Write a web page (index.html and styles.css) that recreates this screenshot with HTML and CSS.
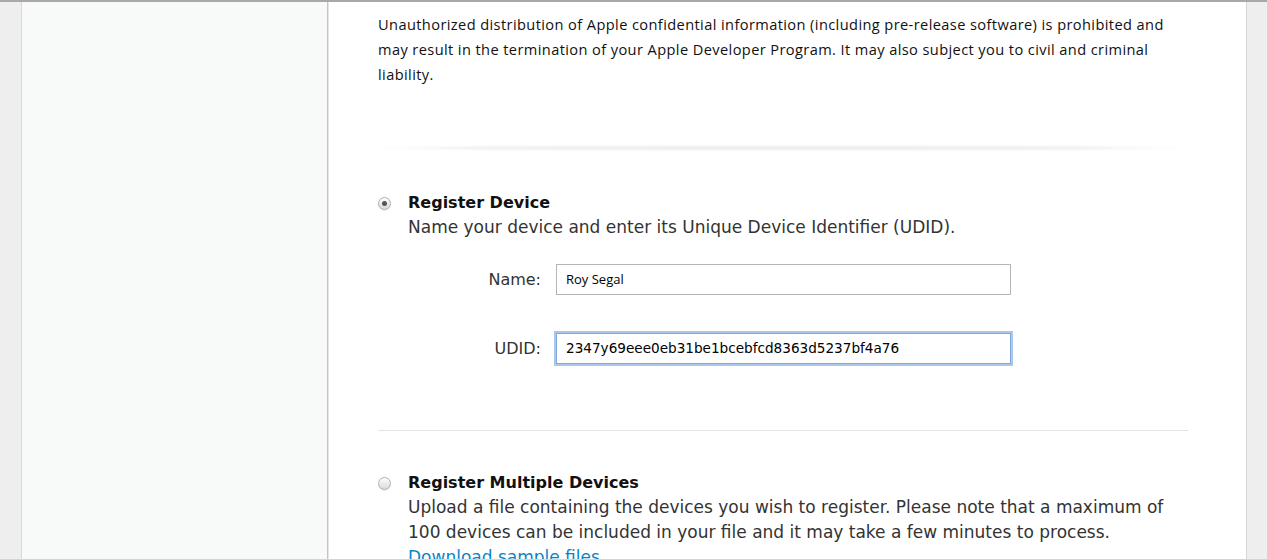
FILE: index.html
```html
<!DOCTYPE html>
<html>
<head>
<meta charset="utf-8">
<link rel="stylesheet" href="styles.css">
</head>
<body>
<div class="page">
  <div class="gutter gutter-left"></div>
  <aside class="sidebar"></aside>
  <main class="main">
    <p class="notice">Unauthorized distribution of Apple confidential information (including pre-release software) is prohibited and may result in the termination of your Apple Developer Program. It may also subject you to civil and criminal liability.</p>
    <div class="shadow-divider"></div>
    <section class="option">
      <span class="radio radio-on"></span>
      <div class="option-body">
        <h2 class="option-title">Register Device</h2>
        <p class="option-desc">Name your device and enter its Unique Device Identifier (UDID).</p>
        <div class="fields">
          <div class="field">
            <label class="field-label">Name:</label>
            <div class="input">Roy Segal</div>
          </div>
          <div class="field">
            <label class="field-label">UDID:</label>
            <div class="input input-focus">2347y69eee0eb31be1bcebfcd8363d5237bf4a76</div>
          </div>
        </div>
      </div>
    </section>
    <div class="rule"></div>
    <section class="option option-2">
      <span class="radio"></span>
      <div class="option-body">
        <h2 class="option-title">Register Multiple Devices</h2>
        <p class="option-desc">Upload a file containing the devices you wish to register. Please note that a maximum of 100 devices can be included in your file and it may take a few minutes to process.</p>
        <a class="link" href="#">Download sample files</a>
      </div>
    </section>
  </main>
  <div class="gutter gutter-right"></div>
</div>
</body>
</html>
```

FILE: styles.css
```css
html, body {
  margin: 0;
  padding: 0;
  height: 100%;
  overflow: hidden;
}
body {
  font-family: "DejaVu Sans", sans-serif;
  color: #222;
  background: #eeeeee;
}
.page {
  display: flex;
  height: 559px;
  border-top: 2px solid #a8a8a8;
  box-sizing: border-box;
}
.gutter {
  background: #eeeeee;
}
.gutter-left {
  width: 21px;
  border-right: 1px solid #d8d8d8;
}
.sidebar {
  width: 305px;
  background: #f8f9f9;
  border-right: 1px solid #c4c4c4;
  box-shadow: 1px 0 0 #e6e6e6;
}
.main {
  flex: 1;
  background: #ffffff;
  padding: 0 49px 0 49px;
  margin-left: 1px;
}
.gutter-right {
  width: 20px;
  border-left: 1px solid #d6d6d6;
}
.notice {
  margin: 0;
  padding-top: 10px;
  width: 800px;
  font-family: "Open Sans", sans-serif;
  font-size: 14.6px;
  letter-spacing: 0.4px;
  line-height: 25px;
  color: #111;
}
.shadow-divider {
  height: 8px;
  margin-top: 59px;
}
.shadow-divider::before {
  content: "";
  display: block;
  height: 4px;
  background: linear-gradient(to right, rgba(235,235,235,0.2), #ededed 12%, #ededed 85%, rgba(240,240,240,0));
  border-radius: 50%;
  filter: blur(1px);
}
.option {
  display: flex;
  align-items: flex-start;
  margin-top: 39px;
}
.radio {
  width: 13px;
  height: 13px;
  border-radius: 50%;
  border: 1px solid #b0b0b0;
  background: linear-gradient(#fdfdfd, #dadada);
  box-sizing: border-box;
  margin-top: 4px;
  margin-right: 17px;
  flex: none;
  box-shadow: 0 1px 1px rgba(0,0,0,0.08);
  display: flex;
  align-items: center;
  justify-content: center;
}
.radio-on::after {
  content: "";
  width: 5px;
  height: 5px;
  border-radius: 50%;
  background: #555;
}
.option-body {
  flex: 1;
}
.option-title {
  margin: 0 0 2px;
  font-size: 16px;
  font-weight: bold;
  line-height: 20px;
  color: #111;
}
.option-desc {
  margin: 0;
  font-size: 17px;
  line-height: 25px;
  color: #333;
}
.fields {
  margin-top: 24px;
  display: flex;
  flex-direction: column;
  gap: 38px;
}
.field {
  display: flex;
  align-items: center;
}
.field-label {
  width: 148px;
  text-align: right;
  font-size: 16px;
  color: #333;
  padding-right: 15px;
  box-sizing: border-box;
}
.input {
  width: 455px;
  height: 31px;
  box-sizing: border-box;
  border: 1px solid #b5b5b5;
  padding: 0 9px;
  font-size: 13px;
  line-height: 29px;
  font-family: "Open Sans", sans-serif;
  color: #000;
  background: #fff;
}
.input-focus {
  border: 1px solid #7ea9d8;
  box-shadow: 0 0 0 2px #a9c8ec;
  font-family: "DejaVu Sans", sans-serif;
  font-size: 13.6px;
}
.rule {
  height: 1px;
  background: #e3e3e3;
  margin-top: 66px;
  margin-right: 9px;
}
.option-2 {
  margin-top: 42px;
}
.link {
  font-size: 17px;
  line-height: 25px;
  color: #0a84c8;
  text-decoration: none;
}
```
